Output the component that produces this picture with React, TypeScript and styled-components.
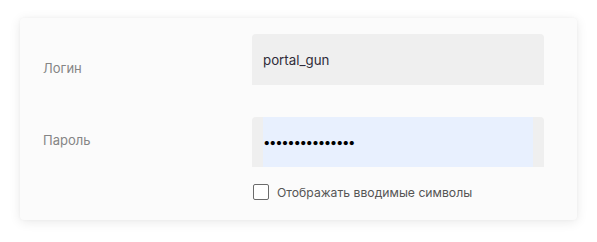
import React from "react";
import styled, { createGlobalStyle } from "styled-components";

const GlobalStyle = createGlobalStyle`
  html, body {
    margin: 0;
    padding: 0;
    background: #ffffff;
  }
  body {
    font-family: Inter, "Open Sans", sans-serif;
  }
`;

const Card = styled.form`
  margin: 18px 20px;
  width: 557px;
  box-sizing: border-box;
  padding: 16px 33px 20px 23px;
  background: #fbfbfb;
  border-radius: 4px;
  box-shadow: 0 2px 12px rgba(0, 0, 0, 0.09), 0 0 3px rgba(0, 0, 0, 0.04);
  display: flex;
  flex-direction: column;
  gap: 32px;
`;

const Row = styled.div`
  display: grid;
  grid-template-columns: 209px 292px;
  align-items: start;
`;

const Label = styled.label<{ $offset: number }>`
  padding-top: ${({ $offset }) => $offset}px;
  font-size: 13px;
  line-height: 16px;
  color: #858585;
`;

const FieldColumn = styled.div`
  display: flex;
  flex-direction: column;
  gap: 17px;
`;

const FieldBox = styled.div<{ $height: number }>`
  height: ${({ $height }) => $height}px;
  padding: 0 11px;
  background: #efefef;
  border-radius: 4px 4px 0 0;
  display: flex;
`;

const TextInput = styled.input<{ $filled?: boolean }>`
  flex: 1;
  min-width: 0;
  border: none;
  outline: none;
  margin: 0;
  padding: 0;
  background: ${({ $filled }) => ($filled ? "#e8f0fe" : "transparent")};
  font-family: Inter, "Open Sans", sans-serif;
  font-size: 13.3px;
  color: #2f2c3a;

  &[type="password"] {
    color: #000;
    letter-spacing: -1.4px;
  }
`;

const CheckRow = styled.label`
  display: flex;
  align-items: center;
  gap: 8px;
  padding-left: 1px;
  font-size: 12.2px;
  color: #555;
`;

const Box = styled.span`
  width: 16px;
  height: 16px;
  box-sizing: border-box;
  border: 1.5px solid #6b6b6b;
  border-radius: 2px;
  background: #fff;
`;

export default function App() {
  return (
    <>
      <GlobalStyle />
      <Card onSubmit={(e) => e.preventDefault()}>
        <Row>
          <Label $offset={26}>Логин</Label>
          <FieldBox $height={51}>
            <TextInput type="text" defaultValue="portal_gun" readOnly />
          </FieldBox>
        </Row>
        <Row>
          <Label $offset={15}>Пароль</Label>
          <FieldColumn>
            <FieldBox $height={50}>
              <TextInput
                $filled
                type="password"
                defaultValue="portalgunpass12"
                readOnly
              />
            </FieldBox>
            <CheckRow>
              <Box />
              Отображать вводимые символы
            </CheckRow>
          </FieldColumn>
        </Row>
      </Card>
    </>
  );
}
